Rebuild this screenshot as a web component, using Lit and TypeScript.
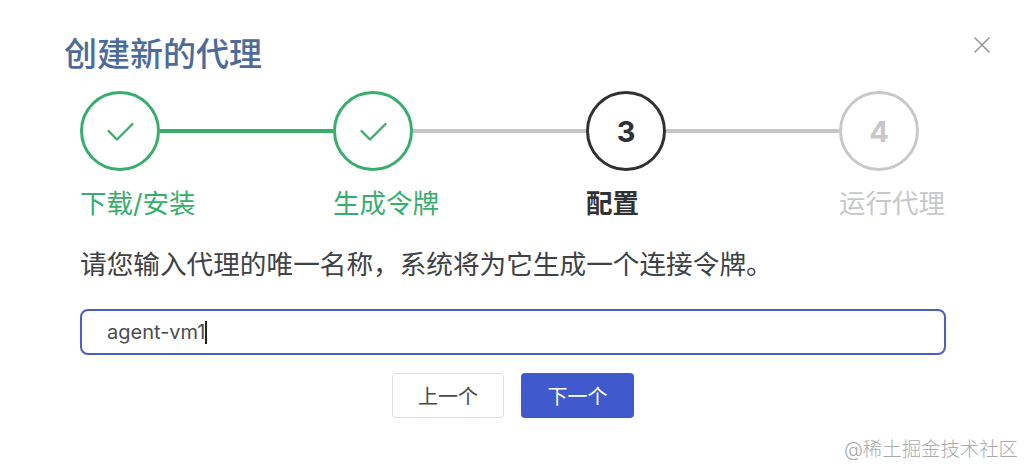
import { LitElement, html, css, svg } from "lit";
import { customElement } from "lit/decorators.js";

const check = svg`<path d="M12.5 24 L21 32.5 L36.5 17" fill="none" stroke="currentColor" stroke-width="2.3" stroke-linecap="round" stroke-linejoin="round"/>`;

interface Step { label: string; state: "done" | "current" | "todo"; n: number; }
const steps: Step[] = [
  { label: "下载/安装", state: "done", n: 1 },
  { label: "生成令牌", state: "done", n: 2 },
  { label: "配置", state: "current", n: 3 },
  { label: "运行代理", state: "todo", n: 4 },
];

@customElement("app-root")
export class AppRoot extends LitElement {
  static styles = css`
    :host {
      display: block;
      position: relative;
      width: 1024px;
      height: 466px;
      overflow: hidden;
      background: #fff;
      font-family: "Inter", "Noto Sans CJK SC", sans-serif;
    }
    .dialog {
      display: flex;
      flex-direction: column;
      padding: 32px 33px 0 64px;
    }
    .head {
      display: flex;
      justify-content: space-between;
      align-items: flex-start;
      height: 59px;
    }
    h1 {
      margin: 0;
      font-size: 33px;
      line-height: 44px;
      font-weight: 500;
      color: #4d6b98;
    }
    .close {
      width: 18px;
      height: 18px;
      margin-top: 4px;
      color: #94979b;
    }
    .body {
      display: flex;
      flex-direction: column;
      padding-left: 16px;
      width: 866px;
    }
    .steps {
      display: grid;
      grid-template-columns: 253px 253px 253px 107px;
    }
    .step {
      display: flex;
      flex-direction: column;
      align-items: flex-start;
    }
    .track {
      display: flex;
      align-items: center;
      width: 100%;
    }
    .circle {
      box-sizing: border-box;
      flex: none;
      width: 80px;
      height: 80px;
      border: 3.5px solid currentColor;
      border-radius: 50%;
      display: flex;
      align-items: center;
      justify-content: center;
      font-size: 29px;
      font-weight: 700;
    }
    .circle svg {
      width: 48px;
      height: 48px;
      display: block;
    }
    .line {
      flex: 1;
      height: 4px;
      background: #c3c5c8;
    }
    .line.done { background: #37ae6b; }
    .label {
      margin-top: 14px;
      font-size: 26.5px;
      line-height: 36px;
      white-space: nowrap;
    }
    .done { color: #37ae6b; }
    .current { color: #2f3133; }
    .current .label { font-weight: 700; }
    .todo { color: #c6c8cb; }
    .desc {
      margin: 24px 0 0;
      font-size: 26.65px;
      line-height: 38px;
      color: #3e4145;
      white-space: nowrap;
    }
    .input {
      box-sizing: border-box;
      margin-top: 26px;
      height: 46px;
      border: 2px solid #4a5fc8;
      border-radius: 8px;
      padding-left: 25px;
      display: flex;
      align-items: center;
      font-size: 20px;
      color: #4a4d51;
    }
    .caret {
      width: 1.5px;
      height: 23px;
      background: #222;
    }
    .actions {
      display: flex;
      justify-content: center;
      gap: 17px;
      margin-top: 18px;
    }
    button {
      box-sizing: border-box;
      width: 113px;
      height: 45px;
      border-radius: 4px;
      font: inherit;
      font-size: 20px;
      padding: 0;
    }
    .prev {
      width: 112px;
      background: #fff;
      border: 1px solid #dcdee1;
      color: #45484c;
    }
    .next {
      background: #4059cd;
      border: none;
      color: #fff;
    }
    .watermark {
      position: absolute;
      right: 6px;
      bottom: 4px;
      font-size: 19.4px;
      line-height: 26px;
      font-weight: 300;
      color: #a9abad;
      white-space: nowrap;
    }
  `;

  render() {
    return html`
      <div class="dialog">
        <div class="head">
          <h1>创建新的代理</h1>
          <svg class="close" viewBox="0 0 18 18" fill="none" stroke="currentColor" stroke-width="1.5">
            <path d="M1.5 1.5 L16.5 16.5 M16.5 1.5 L1.5 16.5" />
          </svg>
        </div>
        <div class="body">
          <div class="steps">
            ${steps.map(
              (s, i) => html`
                <div class="step ${s.state}">
                  <div class="track">
                    <div class="circle">
                      ${s.state === "done"
                        ? html`<svg viewBox="0 0 48 48">${check}</svg>`
                        : s.n}
                    </div>
                    ${i < steps.length - 1
                      ? html`<div class="line ${s.state === "done" && steps[i + 1].state === "done" ? "done" : ""}"></div>`
                      : ""}
                  </div>
                  <div class="label">${s.label}</div>
                </div>
              `
            )}
          </div>
          <p class="desc">请您输入代理的唯一名称，系统将为它生成一个连接令牌。</p>
          <div class="input">agent-vm1<span class="caret"></span></div>
          <div class="actions">
            <button class="prev">上一个</button>
            <button class="next">下一个</button>
          </div>
        </div>
      </div>
      <div class="watermark">@稀土掘金技术社区</div>
    `;
  }
}
